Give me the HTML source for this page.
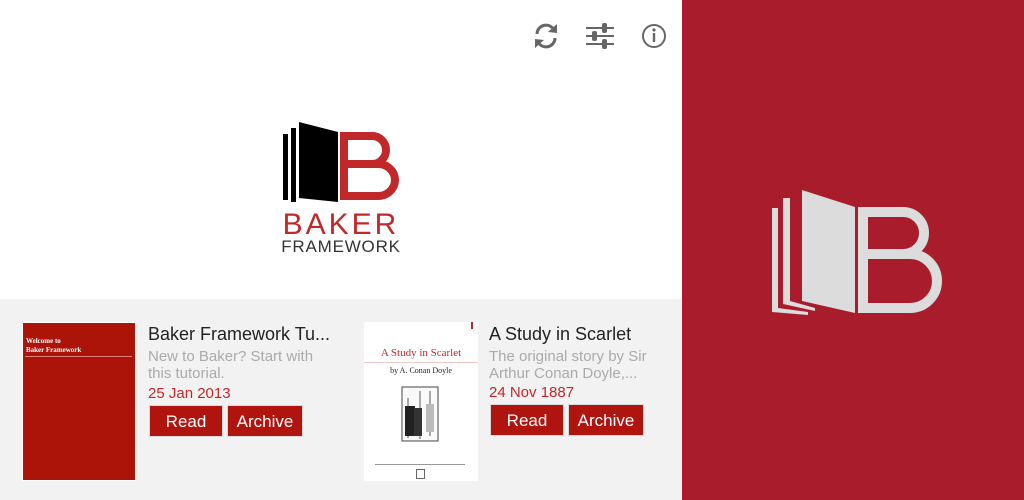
<!DOCTYPE html>
<html><head><style>
body{margin:0;width:1024px;height:500px;position:relative;overflow:hidden;font-family:"Liberation Sans",sans-serif;background:#fff}
.a{position:absolute}
.btn{position:absolute;background:#b0140f;color:#fff;font-size:17px;text-align:center;line-height:32px;height:32px;border:1px solid #d8d8d8;box-sizing:border-box}
.t{font-size:18px;color:#222}
.d{font-size:15px;color:#aaa;line-height:17px}
.dt{font-size:15px;color:#c0282a}
</style></head><body>
<div class="a" style="left:0;top:299px;width:682px;height:201px;background:#f2f2f2"></div>
<div class="a" style="left:682px;top:0;width:342px;height:500px;background:#a81c2c"></div>

<!-- toolbar icons -->
<svg class="a" style="left:530px;top:20px" width="140" height="32" viewBox="0 0 140 32">
<g fill="none" stroke="#666" stroke-width="3">
<path d="M7 14 A9 9 0 0 1 24 10"/><path d="M25 18 A9 9 0 0 1 8 22"/>
</g>
<path d="M27 4 L27 13 L18 12 Z" fill="#666"/><path d="M5 28 L5 19 L14 20 Z" fill="#666"/>
<g stroke="#666" stroke-width="2"><path d="M56 8H84M56 16H84M56 24H84"/></g>
<g fill="#666"><rect x="72" y="3" width="5" height="10" rx="2"/><rect x="62" y="11" width="5" height="10" rx="2"/><rect x="72" y="19" width="5" height="10" rx="2"/></g>
<circle cx="124" cy="16" r="11" fill="none" stroke="#666" stroke-width="2"/>
<circle cx="124" cy="10" r="1.6" fill="#666"/><rect x="122.8" y="13" width="2.4" height="9" fill="#666"/>
</svg>

<!-- center logo -->
<svg class="a" style="left:280px;top:118px" width="125" height="140" viewBox="0 0 125 140">
<rect x="3" y="16" width="5" height="66" fill="#000"/>
<rect x="11" y="10" width="5" height="74" fill="#000"/>
<path d="M19 4 L58 14 L58 84 L19 80 Z" fill="#000"/>
<path d="M64 18 h28 a14 14 0 0 1 0 28 h-28z M64 46 h34 a17 16 0 0 1 0 32 h-34z" fill="none" stroke="#c0282a" stroke-width="8"/>
<rect x="60" y="14" width="8" height="68" fill="#c0282a"/>
<text x="61" y="116" text-anchor="middle" font-family="Liberation Sans" font-size="30" fill="#c0282a" letter-spacing="3">BAKER</text>
<text x="61" y="134" text-anchor="middle" font-family="Liberation Sans" font-size="17" fill="#333" letter-spacing="0.8">FRAMEWORK</text>
</svg>

<!-- right logo -->
<svg class="a" style="left:760px;top:180px" width="190" height="140" viewBox="0 0 190 140">
<g fill="#dcdcdc">
<path d="M12 28 h6 v100 l30 4 v3 l-36 -3z"/>
<path d="M23 18 h7 v103 l25 7 v3 l-32 -7z"/>
<path d="M42 10 L95 27 L95 133 L42 121 Z"/>
</g>
<path d="M103 32 h40 a21 21 0 0 1 0 42 h-40z M103 74 h47 a27 27 0 0 1 0 54 h-47z" fill="none" stroke="#dcdcdc" stroke-width="10"/>
</svg>

<!-- item 1 -->
<div class="a" style="left:22px;top:322px;width:114px;height:159px;background:#ad1409;border:1px solid #fff;box-sizing:border-box"></div>
<div class="a" style="left:26px;top:337px;font-family:'Liberation Serif',serif;font-size:7px;color:#fff;font-weight:bold;line-height:9px">Welcome to<br>Baker Framework</div>
<div class="a" style="left:25px;top:356px;width:107px;height:1px;background:#e08080"></div>
<div class="a t" style="left:148px;top:324px">Baker Framework Tu...</div>
<div class="a d" style="left:148px;top:348px">New to Baker? Start with<br>this tutorial.</div>
<div class="a dt" style="left:148px;top:385px">25 Jan 2013</div>
<div class="btn" style="left:149px;top:405px;width:74px">Read</div>
<div class="btn" style="left:227px;top:405px;width:76px">Archive</div>

<!-- item 2 -->
<div class="a" style="left:364px;top:322px;width:114px;height:159px;background:#fff"></div>
<div class="a" style="left:471px;top:322px;width:2px;height:7px;background:#c0282a"></div>
<div class="a" style="left:364px;top:347px;width:114px;text-align:center;font-family:'Liberation Serif',serif;font-size:11px;color:#c0282a">A Study in Scarlet</div>
<div class="a" style="left:364px;top:362px;width:114px;height:1px;background:#f0c8c8"></div>
<div class="a" style="left:364px;top:366px;width:114px;text-align:center;font-family:'Liberation Serif',serif;font-size:8px;color:#222">by A. Conan Doyle</div>
<svg class="a" style="left:400px;top:386px" width="50" height="58"><rect x="2" y="1" width="36" height="54" fill="#fafafa" stroke="#444"/><path d="M8 12v40M20 5v48M30 5v45" stroke="#555"/><rect x="5" y="20" width="10" height="30" fill="#222"/><rect x="14" y="22" width="8" height="28" fill="#333"/><rect x="26" y="18" width="8" height="28" fill="#bbb"/></svg>
<div class="a" style="left:375px;top:464px;width:90px;height:1px;background:#999"></div>
<div class="a" style="left:416px;top:469px;width:7px;height:8px;border:1px solid #666"></div>
<div class="a t" style="left:489px;top:324px">A Study in Scarlet</div>
<div class="a d" style="left:489px;top:348px">The original story by Sir<br>Arthur Conan Doyle,...</div>
<div class="a dt" style="left:489px;top:384px">24 Nov 1887</div>
<div class="btn" style="left:490px;top:404px;width:74px">Read</div>
<div class="btn" style="left:568px;top:404px;width:76px">Archive</div>
</body></html>
